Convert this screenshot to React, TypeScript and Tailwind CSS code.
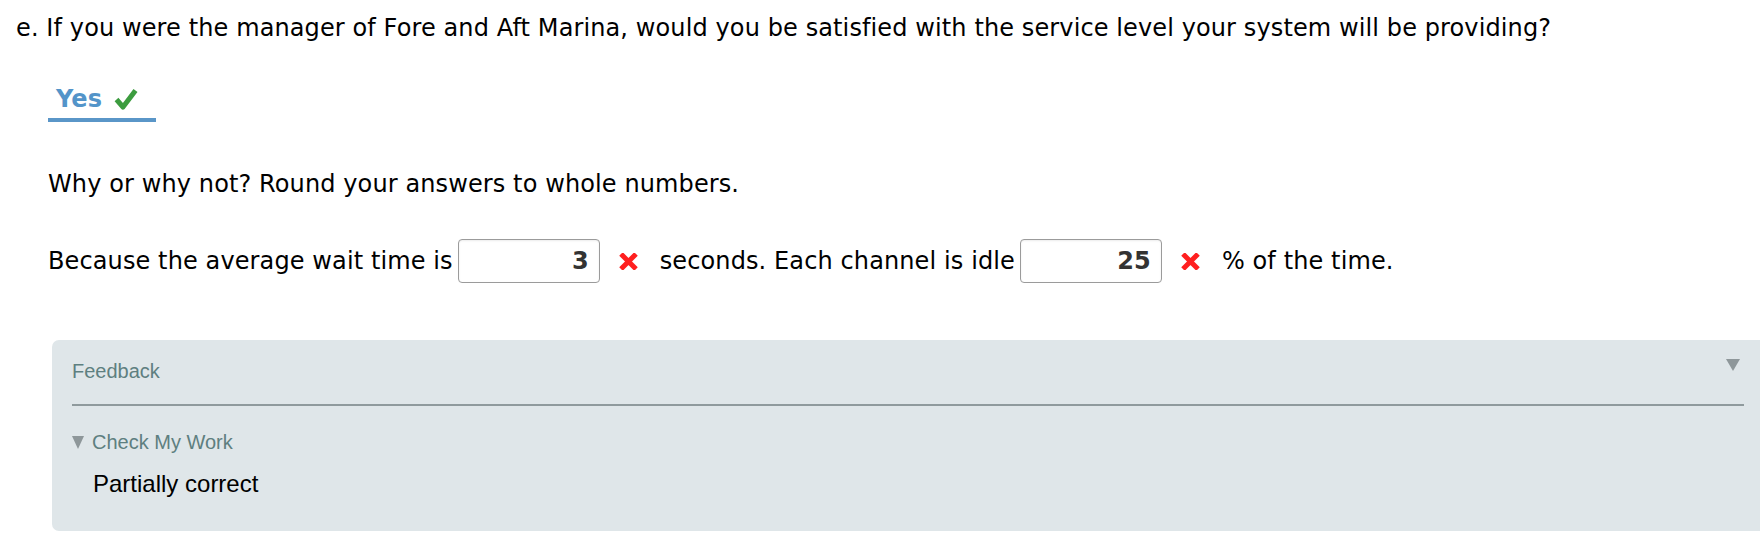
const verdana = "font-['DejaVu_Sans',Verdana,sans-serif] tracking-[0.11px]";
const arial = "font-['Liberation_Sans',Arial,sans-serif]";

function CheckMark() {
  return (
    <svg width="24" height="24" viewBox="0 0 24 24" className="ml-[12px]">
      <path d="M2.5 12.5 L9 20 L21.5 3.5" fill="none" stroke="#3c9c3f" strokeWidth="5" strokeLinejoin="round" />
    </svg>
  );
}

function WrongMark() {
  return (
    <svg width="19" height="17" viewBox="0 0 19 17" className="ml-[19px] mr-[22px]">
      <path d="M2 1 L17 16 M17 1 L2 16" stroke="#ff1f1f" strokeWidth="5" />
    </svg>
  );
}

function AnswerBox({ value }: { value: string }) {
  return (
    <input
      readOnly
      value={value}
      className={`${verdana} ml-[5px] h-[44px] w-[142px] rounded-[4px] border border-[#9b9b9b] bg-white pr-[10px] text-right text-[24px] font-bold text-[#333] shadow-[inset_0_1px_2px_rgba(0,0,0,0.08)] outline-none`}
    />
  );
}

function Triangle({ w = 14, h = 12 }: { w?: number; h?: number }) {
  return (
    <svg width={w} height={h} viewBox={`0 0 ${w} ${h}`}>
      <polygon points={`0,0 ${w},0 ${w / 2},${h}`} fill="#8e979a" />
    </svg>
  );
}

export default function App() {
  return (
    <div className="min-h-[560px] w-[1760px] overflow-hidden bg-white text-black">
      <p className={`${verdana} pl-[16px] pt-[14px] text-[24px] leading-[28px]`}>
        e. If you were the manager of Fore and Aft Marina, would you be satisfied with the service level your system will be providing?
      </p>

      <div className="mt-[43px] pl-[48px]">
        <div className="inline-flex items-center border-b-[4px] border-[#5a96c8] pb-[5px] pl-[8px] pr-[18px]">
          <span className={`${verdana} text-[24px] font-bold leading-[28px] text-[#5394c9]`}>Yes</span>
          <CheckMark />
        </div>
      </div>

      <p className={`${verdana} mt-[48px] pl-[48px] text-[24px] leading-[28px]`}>
        Why or why not? Round your answers to whole numbers.
      </p>

      <div className={`${verdana} mt-[41px] flex h-[44px] items-center pl-[48px] text-[24px] leading-[28px]`}>
        <span>Because the average wait time is</span>
        <AnswerBox value="3" />
        <WrongMark />
        <span>seconds. Each channel is idle</span>
        <AnswerBox value="25" />
        <WrongMark />
        <span>% of the time.</span>
      </div>

      <div className={`${arial} ml-[52px] mt-[57px] h-[191px] rounded-l-[7px] bg-[#dfe6e9] pl-[20px] pr-[16px] pt-[19px]`}>
        <div className="flex items-start justify-between border-b-2 border-[#8f9a9d] pb-[21px]">
          <span className="text-[20px] leading-[24px] text-[#5e7f80]">Feedback</span>
          <span className="mr-[4px]">
            <Triangle />
          </span>
        </div>
        <div className="mt-[24px] flex items-center">
          <Triangle w={12} h={13} />
          <span className="ml-[8px] text-[20px] leading-[24px] text-[#5e7f80]">Check My Work</span>
        </div>
        <p className="mt-[16px] pl-[21px] text-[24px] leading-[28px] text-black">Partially correct</p>
      </div>
    </div>
  );
}
